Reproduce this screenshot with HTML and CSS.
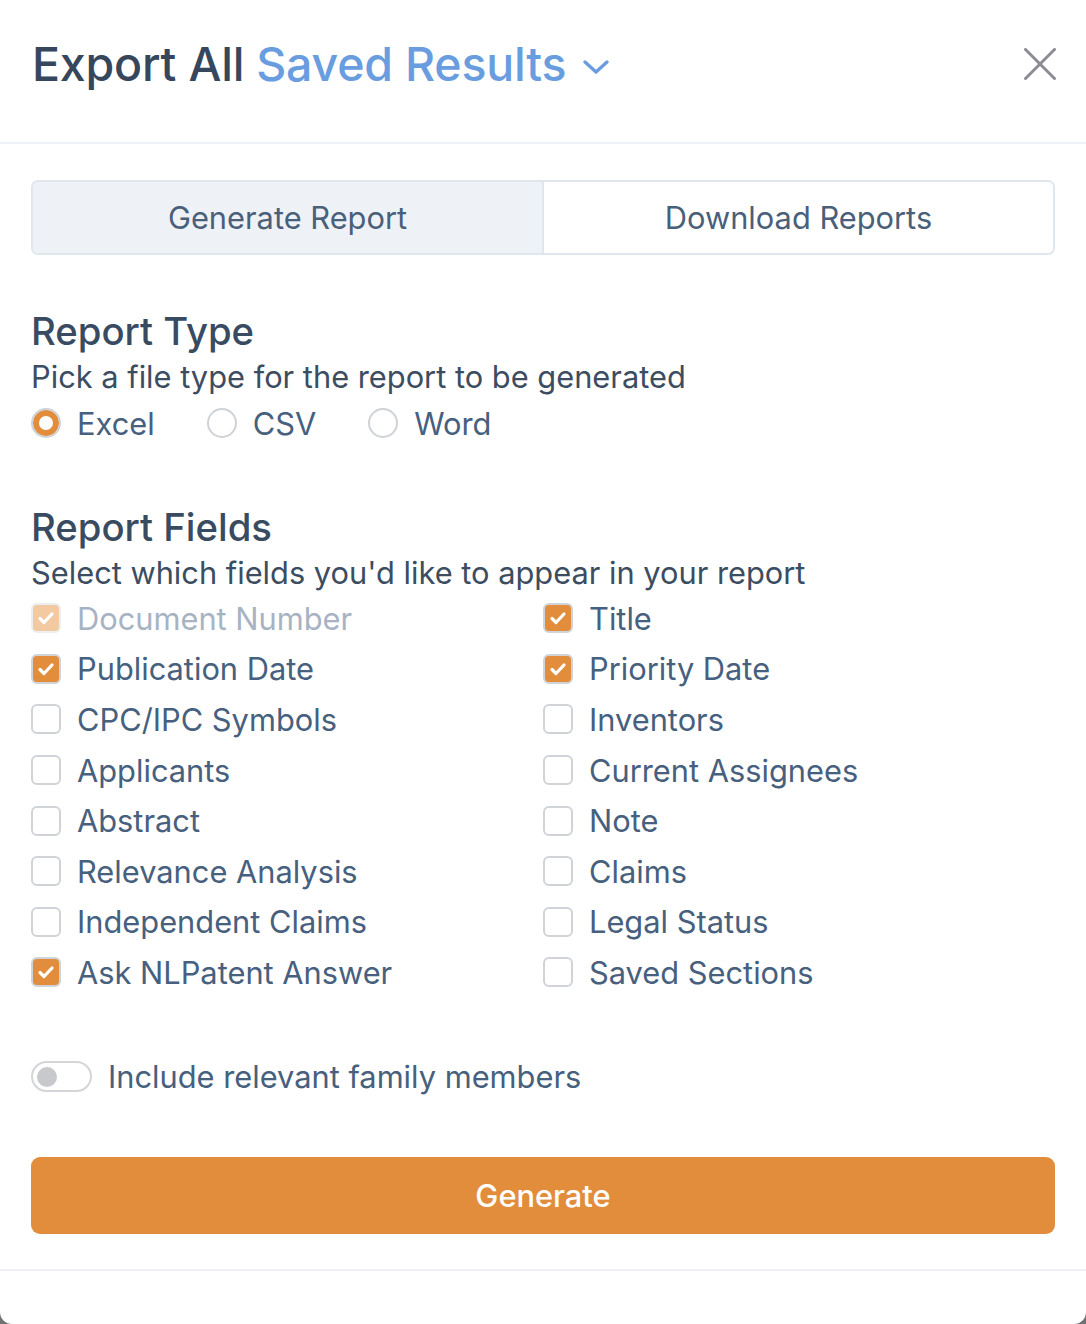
FILE: index.html
```html
<!DOCTYPE html>
<html lang="en">
<head>
  <meta charset="UTF-8">
  <meta name="viewport" content="width=device-width, initial-scale=1.0">
  <title>Export All Saved Results</title>
  <link rel="stylesheet" href="styles.css">
</head>
<body>

<div class="modal">
  <header class="modal-header">
    <h1 class="modal-title">
      Export All <span class="scope">Saved Results</span>
      <svg class="chevron" width="30" height="20" viewBox="0 0 30 20"><path d="M4 6 L15 16 L26 6" fill="none" stroke="#6a9de0" stroke-width="3.4" stroke-linecap="round" stroke-linejoin="round"/></svg>
    </h1>
    <button class="close-btn" aria-label="Close">
      <svg width="32" height="32" viewBox="0 0 32 32"><path d="M1.5 1.5 L30.5 30.5 M30.5 1.5 L1.5 30.5" stroke="#8a8e92" stroke-width="3" stroke-linecap="round"/></svg>
    </button>
  </header>

  <div class="modal-body">
    <div class="tabs">
      <div class="tab active">Generate Report</div>
      <div class="tab">Download Reports</div>
    </div>

    <section class="block">
      <h2 class="block-title">Report Type</h2>
      <p class="block-sub">Pick a file type for the report to be generated</p>
      <div class="radio-row">
        <label class="radio checked"><span class="dot"></span>Excel</label>
        <label class="radio"><span class="dot"></span>CSV</label>
        <label class="radio"><span class="dot"></span>Word</label>
      </div>
    </section>

    <section class="block fields-block">
      <h2 class="block-title">Report Fields</h2>
      <p class="block-sub">Select which fields you'd like to appear in your report</p>
      <div class="fields" id="fields"></div>
    </section>

    <div class="toggle-row">
      <span class="toggle"><span class="knob"></span></span>
      <span class="toggle-label">Include relevant family members</span>
    </div>

    <button class="generate-btn">Generate</button>
  </div>

  <div class="modal-footer"></div>
</div>

<script>
  const fields = [
    ['Document Number', 'disabled'], ['Title', 'on'],
    ['Publication Date', 'on'], ['Priority Date', 'on'],
    ['CPC/IPC Symbols', ''], ['Inventors', ''],
    ['Applicants', ''], ['Current Assignees', ''],
    ['Abstract', ''], ['Note', ''],
    ['Relevance Analysis', ''], ['Claims', ''],
    ['Independent Claims', ''], ['Legal Status', ''],
    ['Ask NLPatent Answer', 'on'], ['Saved Sections', '']
  ];
  const check = '<svg width="30" height="30" viewBox="0 0 30 30"><path d="M9 15.5 L13 19.5 L21 11" fill="none" stroke="#fff" stroke-width="3.2" stroke-linecap="round" stroke-linejoin="round"/></svg>';

  document.getElementById('fields').innerHTML = fields.map(([name, state]) => `
    <label class="field ${state}">
      <span class="box">${state ? check : ''}</span>${name}
    </label>
  `).join('');
</script>

</body>
</html>
```

FILE: styles.css
```css
* {
  box-sizing: border-box;
}

body {
  margin: 0;
  background: #6f7172;
  font-family: Inter, "Noto Sans", sans-serif;
}

.modal {
  height: 1324px;
  background: #fff;
  border-radius: 0 0 12px 12px;
  overflow: hidden;
}

.modal-header {
  height: 144px;
  padding: 0 30px 15px 32px;
  display: flex;
  align-items: center;
  justify-content: space-between;
  border-bottom: 2px solid #eef1f5;
}

.modal-title {
  margin: 0;
  font-size: 46.5px;
  font-weight: 500;
  color: #36475d;
  letter-spacing: -0.2px;
  display: flex;
  align-items: center;
  gap: 12px;
}

.scope {
  color: #6a9de0;
}

.chevron {
  margin-left: 3px;
  margin-top: 4px;
}

.close-btn {
  background: none;
  border: none;
  padding: 0;
  cursor: pointer;
  display: flex;
}

.modal-body {
  padding: 36px 31px 0 31px;
}

.tabs {
  display: flex;
  height: 75px;
  border: 2px solid #e0e6ed;
  border-radius: 7px;
  overflow: hidden;
}

.tab {
  flex: 1;
  display: flex;
  align-items: center;
  justify-content: center;
  font-size: 30.8px;
  color: #4a5f79;
  background: #fff;
}

.tab.active {
  background: #eef2f7;
  border-right: 2px solid #e0e6ed;
}

.block {
  margin-top: 54px;
}

.block-title {
  margin: 0;
  font-size: 38.3px;
  font-weight: 500;
  line-height: 45px;
  color: #394b61;
}

.block-sub {
  margin: 0;
  font-size: 30.8px;
  line-height: 46px;
  color: #3c4d62;
}

.radio-row {
  display: flex;
  gap: 52px;
  height: 46px;
  align-items: center;
}

.radio {
  display: flex;
  align-items: center;
  gap: 16px;
  font-size: 30.8px;
  color: #46607e;
}

.dot {
  width: 30px;
  height: 30px;
  border-radius: 50%;
  border: 2px solid #cfd2d6;
  background: #fff;
}

.radio.checked .dot {
  box-shadow: inset 0 0 0 6px #e28d3b, inset 0 0 0 14px #fff;
}

.fields-block {
  margin-top: 59px;
}

.fields {
  display: grid;
  grid-template-columns: 512px 1fr;
  margin-top: -3px;
}

.field {
  display: flex;
  align-items: center;
  gap: 16px;
  height: 50.6px;
  font-size: 30.8px;
  color: #46607e;
}

.box {
  width: 30px;
  height: 30px;
  border-radius: 6px;
  border: 2px solid #d0d3d7;
  background: #fff;
  display: flex;
  align-items: center;
  justify-content: center;
}

.box svg {
  margin: -2px;
}

.field.on .box {
  background: #e28d3b;
}

.field.disabled {
  color: #a7b3c3;
}

.field.disabled .box {
  background: #f3c9a2;
  border-color: #eceef0;
}

.toggle-row {
  display: flex;
  align-items: center;
  gap: 16px;
  margin-top: 63px;
  height: 32px;
}

.toggle {
  width: 61px;
  height: 31px;
  border: 2px solid #d3d5d8;
  border-radius: 16px;
  display: flex;
  align-items: center;
  padding-left: 4px;
}

.knob {
  width: 20px;
  height: 20px;
  border-radius: 50%;
  background: #c7c9cc;
}

.toggle-label {
  font-size: 30.8px;
  color: #46607e;
}

.generate-btn {
  display: block;
  width: 100%;
  height: 77px;
  margin-top: 64px;
  border: none;
  border-radius: 9px;
  background: #e28d3b;
  color: #fff;
  font-family: Inter, "Noto Sans", sans-serif;
  font-size: 30.8px;
  font-weight: 500;
  cursor: pointer;
}

.modal-footer {
  margin-top: 35px;
  border-top: 2px solid #eef1f5;
}
```
